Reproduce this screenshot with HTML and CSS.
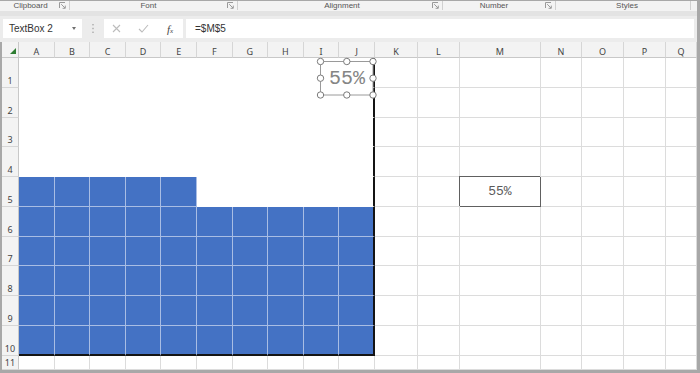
FILE: index.html
```html
<!DOCTYPE html>
<html>
<head>
<meta charset="utf-8">
<link rel="stylesheet" href="styles.css">
</head>
<body>
<div class="frame">
  <div class="ribbon">
    <div class="grp g-clip"><span class="lbl">Clipboard</span><svg class="launch" width="7" height="7" viewBox="0 0 7 7"><path d="M0.5 6V0.5H6" /><path d="M2.2 2.2L6 6M3.6 6.3H6.3V3.6" /></svg></div>
    <div class="grp g-font"><span class="lbl">Font</span><svg class="launch" width="7" height="7" viewBox="0 0 7 7"><path d="M0.5 6V0.5H6" /><path d="M2.2 2.2L6 6M3.6 6.3H6.3V3.6" /></svg></div>
    <div class="grp g-align"><span class="lbl">Alignment</span><svg class="launch" width="7" height="7" viewBox="0 0 7 7"><path d="M0.5 6V0.5H6" /><path d="M2.2 2.2L6 6M3.6 6.3H6.3V3.6" /></svg></div>
    <div class="grp g-num"><span class="lbl">Number</span><svg class="launch" width="7" height="7" viewBox="0 0 7 7"><path d="M0.5 6V0.5H6" /><path d="M2.2 2.2L6 6M3.6 6.3H6.3V3.6" /></svg></div>
    <div class="grp g-styles"><span class="lbl">Styles</span></div>
  </div>
  <div class="band"></div>
  <div class="fbar">
    <div class="namebox"><span>TextBox 2</span><span class="caret"></span></div>
    <div class="dots"><svg width="2" height="9" viewBox="0 0 2 9"><rect x="0" y="0" width="2" height="1.4"/><rect x="0" y="3.8" width="2" height="1.4"/><rect x="0" y="7.6" width="2" height="1.4"/></svg></div>
    <div class="fbtns">
      <span class="fb"><svg width="9" height="9" viewBox="0 0 9 9"><path d="M1 1L8 8M8 1L1 8"/></svg></span>
      <span class="fb"><svg width="11" height="9" viewBox="0 0 11 9"><path d="M1 5L4 8L10 1"/></svg></span>
      <span class="fb fx"><i>f</i><small>x</small></span>
    </div>
    <div class="formula">=$M$5</div>
  </div>
  <div class="sheet">
    <div class="corner"><span class="tri"></span></div>
    <div class="ch">A</div><div class="ch">B</div><div class="ch">C</div><div class="ch">D</div><div class="ch">E</div><div class="ch">F</div><div class="ch">G</div><div class="ch">H</div><div class="ch">I</div><div class="ch">J</div><div class="ch">K</div><div class="ch">L</div><div class="ch">M</div><div class="ch">N</div><div class="ch">O</div><div class="ch">P</div><div class="ch">Q</div>

    <div class="rh">1</div>
    <div class="c w"></div><div class="c w"></div><div class="c w"></div><div class="c w"></div><div class="c w"></div><div class="c w"></div><div class="c w"></div><div class="c w"></div><div class="c w"></div><div class="c w jr"></div>
    <div class="c"></div><div class="c"></div><div class="c"></div><div class="c"></div><div class="c"></div><div class="c"></div><div class="c"></div>

    <div class="rh">2</div>
    <div class="c w"></div><div class="c w"></div><div class="c w"></div><div class="c w"></div><div class="c w"></div><div class="c w"></div><div class="c w"></div><div class="c w"></div><div class="c w"></div><div class="c w jr"></div>
    <div class="c"></div><div class="c"></div><div class="c"></div><div class="c"></div><div class="c"></div><div class="c"></div><div class="c"></div>

    <div class="rh">3</div>
    <div class="c w"></div><div class="c w"></div><div class="c w"></div><div class="c w"></div><div class="c w"></div><div class="c w"></div><div class="c w"></div><div class="c w"></div><div class="c w"></div><div class="c w jr"></div>
    <div class="c"></div><div class="c"></div><div class="c"></div><div class="c"></div><div class="c"></div><div class="c"></div><div class="c"></div>

    <div class="rh">4</div>
    <div class="c w"></div><div class="c w"></div><div class="c w"></div><div class="c w"></div><div class="c w"></div><div class="c w"></div><div class="c w"></div><div class="c w"></div><div class="c w"></div><div class="c w jr"></div>
    <div class="c"></div><div class="c"></div><div class="c"></div><div class="c"></div><div class="c"></div><div class="c"></div><div class="c"></div>

    <div class="rh">5</div>
    <div class="c b"></div><div class="c b"></div><div class="c b"></div><div class="c b"></div><div class="c b"></div><div class="c w"></div><div class="c w"></div><div class="c w"></div><div class="c w"></div><div class="c w jr"></div>
    <div class="c"></div><div class="c"></div><div class="c m5">55%</div><div class="c"></div><div class="c"></div><div class="c"></div><div class="c"></div>

    <div class="rh">6</div>
    <div class="c b"></div><div class="c b"></div><div class="c b"></div><div class="c b"></div><div class="c b"></div><div class="c b"></div><div class="c b"></div><div class="c b"></div><div class="c b"></div><div class="c b jr"></div>
    <div class="c"></div><div class="c"></div><div class="c"></div><div class="c"></div><div class="c"></div><div class="c"></div><div class="c"></div>

    <div class="rh">7</div>
    <div class="c b"></div><div class="c b"></div><div class="c b"></div><div class="c b"></div><div class="c b"></div><div class="c b"></div><div class="c b"></div><div class="c b"></div><div class="c b"></div><div class="c b jr"></div>
    <div class="c"></div><div class="c"></div><div class="c"></div><div class="c"></div><div class="c"></div><div class="c"></div><div class="c"></div>

    <div class="rh">8</div>
    <div class="c b"></div><div class="c b"></div><div class="c b"></div><div class="c b"></div><div class="c b"></div><div class="c b"></div><div class="c b"></div><div class="c b"></div><div class="c b"></div><div class="c b jr"></div>
    <div class="c"></div><div class="c"></div><div class="c"></div><div class="c"></div><div class="c"></div><div class="c"></div><div class="c"></div>

    <div class="rh">9</div>
    <div class="c b"></div><div class="c b"></div><div class="c b"></div><div class="c b"></div><div class="c b"></div><div class="c b"></div><div class="c b"></div><div class="c b"></div><div class="c b"></div><div class="c b jr"></div>
    <div class="c"></div><div class="c"></div><div class="c"></div><div class="c"></div><div class="c"></div><div class="c"></div><div class="c"></div>

    <div class="rh">10</div>
    <div class="c b bt"></div><div class="c b bt"></div><div class="c b bt"></div><div class="c b bt"></div><div class="c b bt"></div><div class="c b bt"></div><div class="c b bt"></div><div class="c b bt"></div><div class="c b bt"></div><div class="c b jr bt"></div>
    <div class="c"></div><div class="c"></div><div class="c"></div><div class="c"></div><div class="c"></div><div class="c"></div><div class="c"></div>

    <div class="rh">11</div>
    <div class="c"></div><div class="c"></div><div class="c"></div><div class="c"></div><div class="c"></div><div class="c"></div><div class="c"></div><div class="c"></div><div class="c"></div><div class="c"></div>
    <div class="c"></div><div class="c"></div><div class="c"></div><div class="c"></div><div class="c"></div><div class="c"></div><div class="c"></div>

    <div class="textbox">
      <svg class="tb-frame" width="54" height="35" viewBox="0 0 54 35">
        <rect x="0.5" y="0.5" width="52.5" height="33.5" />
        <circle cx="0.5" cy="0.5" r="3.2"/><circle cx="26.8" cy="0.5" r="3.2"/><circle cx="53" cy="0.5" r="3.2"/>
        <circle cx="0.5" cy="17.2" r="3.2"/><circle cx="53" cy="17.2" r="3.2"/>
        <circle cx="0.5" cy="34" r="3.2"/><circle cx="26.8" cy="34" r="3.2"/><circle cx="53" cy="34" r="3.2"/>
      </svg>
      <span class="tb-text">55%</span>
    </div>
  </div>
</div>
</body>
</html>
```

FILE: styles.css
```css
html, body {
  margin: 0;
  padding: 0;
  background: #ffffff;
}

.frame {
  width: 700px;
  height: 373px;
  box-sizing: border-box;
  border-top: 1px solid #a8a8a8;
  border-right: 3px solid #a8a8a8;
  border-bottom: 3px solid #a8a8a8;
  display: flex;
  flex-direction: column;
  background: #eeeeee;
  font-family: "Liberation Sans", Arial, sans-serif;
  overflow: hidden;
}

/* ribbon group labels */
.ribbon {
  height: 10px;
  display: flex;
  padding-left: 2px;
  background: #f3f3f3;
  font-size: 8px;
  line-height: 10px;
  color: #555555;
}

.grp {
  display: flex;
  align-items: center;
  box-sizing: border-box;
  border-right: 1px solid #d0d0d0;
  height: 9px;
}

.grp .lbl {
  flex: 1;
  text-align: center;
  white-space: nowrap;
}

.launch {
  margin-right: 3px;
  fill: none;
  stroke: #9a9a9a;
  stroke-width: 1;
}

.g-clip { width: 68px; }
.g-font { width: 168px; }
.g-align { width: 205px; }
.g-align .lbl { padding-left: 14px; }
.g-num { width: 113px; }
.g-styles { width: 135px; }
.g-styles .lbl { padding-left: 8px; }

.band {
  height: 5px;
  background: #e3e3e3;
}

/* formula bar */
.fbar {
  height: 26px;
  box-sizing: border-box;
  padding: 3px 3px 4px 3px;
  display: flex;
  background: #ececec;
}

.namebox {
  width: 79px;
  background: #ffffff;
  display: flex;
  align-items: center;
  justify-content: space-between;
  padding: 0 6px 0 6px;
  box-sizing: border-box;
  font-size: 10px;
  color: #333333;
}

.caret {
  width: 0;
  height: 0;
  border-left: 2.5px solid transparent;
  border-right: 2.5px solid transparent;
  border-top: 3px solid #707070;
}

.dots {
  width: 22px;
  display: flex;
  align-items: center;
  justify-content: center;
  fill: #bdbdbd;
}

.fbtns {
  width: 79px;
  background: #ffffff;
  display: flex;
  align-items: center;
  gap: 9px;
  padding-left: 3px;
  box-sizing: border-box;
  margin-right: 3px;
}

.fb {
  width: 18px;
  display: flex;
  justify-content: center;
  align-items: center;
}

.fb svg {
  fill: none;
  stroke: #bcbcbc;
  stroke-width: 1.1;
}

.fx {
  font-family: "Liberation Serif", serif;
  color: #444444;
  font-size: 11px;
  align-items: baseline;
}

.fx small {
  font-size: 7px;
  font-style: italic;
}

.formula {
  flex: 1;
  background: #ffffff;
  display: flex;
  align-items: center;
  padding-left: 9px;
  font-size: 10px;
  color: #333333;
}

/* sheet */
.sheet {
  flex: 1;
  position: relative;
  display: grid;
  grid-template-columns: 17px repeat(10, 35.6px) 43px 42px 81px 41px 42px 42px 1fr;
  grid-template-rows: 16px repeat(10, 29.75px) 1fr;
  border-left: 2px solid #a8a8a8;
  background: #ffffff;
}

.corner {
  background: #f3f3f3;
  border-right: 1px solid #c8c8c8;
  border-bottom: 1px solid #c8c8c8;
  box-sizing: border-box;
  display: flex;
  align-items: flex-end;
  justify-content: flex-end;
  padding: 0 2px 3px 0;
}

.tri {
  width: 0;
  height: 0;
  border-left: 6px solid transparent;
  border-bottom: 6px solid #2e7d32;
}

.ch {
  background: #f3f3f3;
  border-right: 1px solid #d6d6d6;
  border-bottom: 1px solid #c8c8c8;
  box-sizing: border-box;
  display: flex;
  align-items: center;
  justify-content: center;
  padding-top: 3px;
  font-family: "Noto Sans", sans-serif;
  font-size: 9px;
  color: #444444;
}

.rh {
  background: #f3f3f3;
  border-right: 1px solid #c8c8c8;
  border-bottom: 1px solid #d6d6d6;
  box-sizing: border-box;
  display: flex;
  align-items: flex-end;
  justify-content: center;
  padding-bottom: 0;
  font-family: "Noto Sans", sans-serif;
  font-size: 9px;
  line-height: 12px;
  color: #444444;
}

.c {
  box-sizing: border-box;
  border-right: 1px solid #dcdcdc;
  border-bottom: 1px solid #dcdcdc;
}

.w {
  border-color: transparent;
}

.b {
  background: #4472c4;
  border-color: #a9bde4;
}

.jr {
  border-right: 2px solid #141414;
}

.bt {
  border-bottom: 2px solid #141414;
}

.m5 {
  border-right-color: #606060;
  border-bottom-color: #606060;
  box-shadow: -1px -1px 0 #606060;
  display: flex;
  align-items: center;
  justify-content: center;
  padding-top: 1px;
  font-family: "Liberation Mono", monospace;
  font-size: 13px;
  color: #5a5a5a;
}

/* floating text box */
.textbox {
  position: absolute;
  left: 318px;
  top: 19px;
  width: 53px;
  height: 34px;
  display: flex;
  align-items: center;
  justify-content: center;
}

.tb-frame {
  position: absolute;
  left: 0;
  top: 0;
  overflow: visible;
  fill: #ffffff;
  stroke: #7a7a7a;
  stroke-width: 1;
}

.tb-frame rect {
  fill: none;
  stroke: #9a9a9a;
}

.tb-text {
  position: relative;
  font-family: "Liberation Mono", monospace;
  font-size: 20px;
  color: #858585;
  padding-left: 1px;
}
```
